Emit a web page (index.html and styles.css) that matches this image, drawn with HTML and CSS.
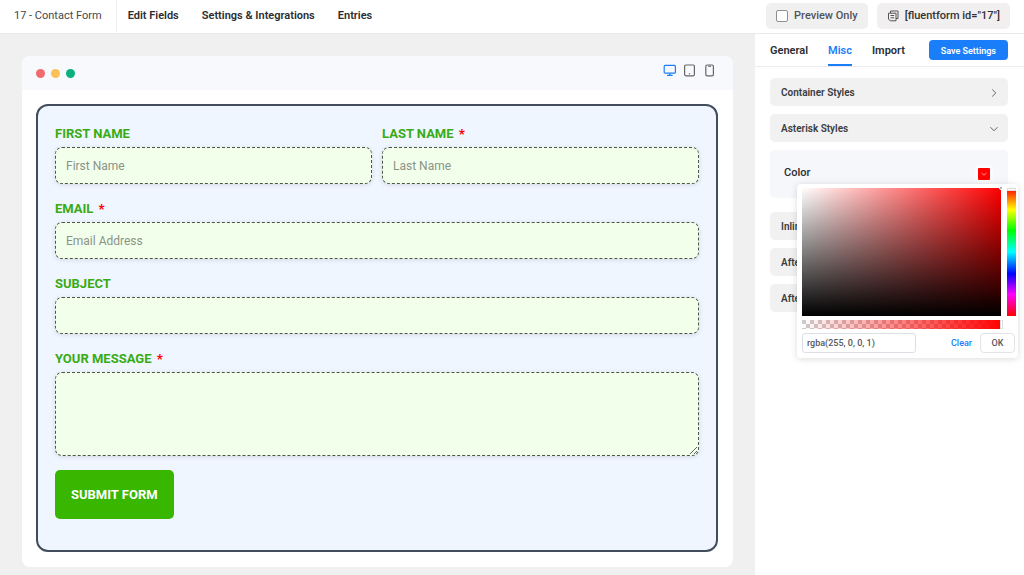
FILE: index.html
```html
<!DOCTYPE html>
<html lang="en">
<head>
<meta charset="utf-8">
<meta name="viewport" content="width=device-width, initial-scale=1">
<title>Contact Form</title>
<link rel="stylesheet" href="styles.css">
</head>
<body>
<header class="topbar">
  <span class="form-title">17 - Contact Form</span>
  <nav class="nav">
    <a href="#fields">Edit Fields</a>
    <a href="#settings">Settings &amp; Integrations</a>
    <a href="#entries">Entries</a>
  </nav>
  <div class="top-actions">
    <label class="chip"><input type="checkbox" class="check">Preview Only</label>
    <button type="button" class="chip chip-code">
      <svg width="12" height="12" viewBox="0 0 12 12" fill="none" stroke="#555" stroke-width="1"><path d="M3.5 3V1h7.5v7.5H9"/><path d="M1.5 3.2H9v7.6H3.2L1.5 9z"/><path d="M3.5 5.5h3.6M3.5 7.8h3.6"/></svg>
      [fluentform id="17"]
    </button>
  </div>
</header>
<div class="workspace">
  <main class="stage">
    <section class="window">
      <div class="window-bar">
        <div class="dots"><i class="dot red"></i><i class="dot yellow"></i><i class="dot green"></i></div>
        <div class="devices">
          <button type="button" class="device active" aria-label="Desktop"><svg width="14" height="14" viewBox="0 0 14 14" fill="none" stroke="currentColor" stroke-width="1.2"><rect x="1.2" y="1.4" width="11.2" height="7.8" rx="1"/><path d="M6.8 9.2v2M4 11.4h5.6"/></svg></button>
          <button type="button" class="device" aria-label="Tablet"><svg width="14" height="14" viewBox="0 0 14 14" fill="none" stroke="currentColor" stroke-width="1.2"><rect x="1.6" y="1" width="9.8" height="10.8" rx="1.2"/><path d="M5.9 9.8h1.2"/></svg></button>
          <button type="button" class="device" aria-label="Mobile"><svg width="14" height="14" viewBox="0 0 14 14" fill="none" stroke="currentColor" stroke-width="1.2"><rect x="2.8" y="1" width="7.6" height="10.8" rx="1.4"/><path d="M5.2 2.2h2.8"/></svg></button>
        </div>
      </div>
      <form class="form">
        <div class="row">
          <div class="field"><label for="first">FIRST NAME</label><input id="first" type="text" placeholder="First Name"></div>
          <div class="field"><label for="last">LAST NAME <b class="req">*</b></label><input id="last" type="text" placeholder="Last Name"></div>
        </div>
        <div class="field"><label for="email">EMAIL <b class="req">*</b></label><input id="email" type="email" placeholder="Email Address"></div>
        <div class="field"><label for="subject">SUBJECT</label><input id="subject" type="text"></div>
        <div class="field"><label for="message">YOUR MESSAGE <b class="req">*</b></label><textarea id="message"></textarea></div>
        <button type="button" class="submit">SUBMIT FORM</button>
      </form>
    </section>
  </main>
  <aside class="sidebar">
    <div class="tabs">
      <a href="#general" class="tab">General</a>
      <a href="#misc" class="tab selected">Misc</a>
      <a href="#import" class="tab">Import</a>
      <button type="button" class="save">Save Settings</button>
    </div>
    <div class="panels">
      <button type="button" class="accordion">Container Styles<svg width="10" height="10" viewBox="0 0 10 10" fill="none" stroke="#666" stroke-width="1"><path d="M3.2 1.5 6.8 5 3.2 8.5"/></svg></button>
      <button type="button" class="accordion">Asterisk Styles<svg width="10" height="10" viewBox="0 0 10 10" fill="none" stroke="#666" stroke-width="1"><path d="M1.5 3.2 5 6.8 8.5 3.2"/></svg></button>
      <div class="panel">
        <span>Color</span>
        <button type="button" class="swatch" aria-label="Pick color"><svg width="12" height="12" viewBox="0 0 12 12"><rect width="12" height="12" rx="1" fill="#f00"/><path d="M3.5 5 6 7.2 8.5 5" fill="none" stroke="#ff8f8f"/></svg></button>
        <div class="picker">
          <div class="picker-main">
            <div class="saturation"><i class="cursor"></i></div>
            <div class="hue"><i class="hue-thumb"></i></div>
          </div>
          <div class="alpha"><i class="alpha-thumb"></i></div>
          <div class="picker-foot">
            <input type="text" class="value" aria-label="Color value" value="rgba(255, 0, 0, 1)">
            <button type="button" class="clear">Clear</button>
            <button type="button" class="ok">OK</button>
          </div>
        </div>
      </div>
      <button type="button" class="accordion">Inline Error</button>
      <button type="button" class="accordion">After Success</button>
      <button type="button" class="accordion">After Error</button>
    </div>
  </aside>
</div>
</body>
</html>
```
FILE: styles.css
```css
* { box-sizing: border-box; }
body {
  margin: 0;
  min-height: 100vh;
  display: flex;
  flex-direction: column;
  font-family: Roboto, "Liberation Sans", sans-serif;
  font-size: 11px;
  line-height: 16px;
  color: #2b2d31;
  background: #fff;
}
button, input, textarea { font: inherit; color: inherit; }
button { border: 0; background: none; padding: 0; cursor: pointer; }
a { color: inherit; text-decoration: none; }
svg { display: block; flex: none; }

.topbar { display: flex; align-items: center; height: 34px; padding-bottom: 1px; border-bottom: 1px solid #e9e9eb; }
.form-title { display: flex; align-items: center; align-self: stretch; padding: 0 14px; border-right: 1px solid #ededed; color: #45484d; }
.nav { display: flex; gap: 23px; padding-left: 11px; font-weight: 600; }
.top-actions { display: flex; gap: 9px; margin-left: auto; padding-right: 14px; }
.chip { display: flex; align-items: center; gap: 6px; height: 26px; padding: 0 10px; border-radius: 5px; background: #f0f0f1; font-weight: 500; color: #50535a; }
.chip-code { gap: 6px; color: #333; background: #f1efef; }
.check { appearance: none; width: 12px; height: 12px; margin: 0; border: 1px solid #8c8f94; border-radius: 2px; background: #fff; }

.workspace { display: flex; flex: 1; }
.stage { flex: 1; min-width: 0; padding: 22px 22px 8px; background: #f0f0f0; }
.window { border-radius: 8px; background: #fff; padding-bottom: 15px; }
.window-bar { display: flex; align-items: center; justify-content: space-between; height: 34px; padding: 0 16px 0 14px; border-radius: 8px 8px 0 0; background: #f8f9fc; }
.dots { display: flex; gap: 6px; }
.dot { width: 9px; height: 9px; border-radius: 50%; }
.red { background: #f26b6f; }
.yellow { background: #fcc156; }
.green { background: #0bb07b; }
.devices { display: flex; gap: 6px; padding-bottom: 5px; }
.device { color: #666; }
.device.active { color: #1a7efb; }

.form { display: flex; flex-direction: column; gap: 14px; margin: 14px 15px 0 14px; padding: 17px 17px 31px; border: 2px solid #434c5c; border-radius: 12px; background: #f0f6ff; }
.row { display: grid; grid-template-columns: 1fr 1fr; gap: 10px; }
.field { display: flex; flex-direction: column; gap: 3px; }
.field label { padding-top: 1px; font-size: 13px; line-height: 20px; font-weight: 700; color: #38ab14; }
.req { margin-left: 2px; color: #f00; }
.field input, .field textarea { width: 100%; height: 37px; padding: 1px 10px 0; border: 1px dashed #4c5648; border-radius: 7px; background: #f2ffeb; font-size: 12px; box-shadow: 0 1px 4px rgba(60, 70, 100, .16); }
.field textarea { display: block; height: 84px; resize: vertical; }
.field ::placeholder { color: #8b9388; opacity: 1; }
.submit { align-self: flex-start; height: 49px; padding: 0 16px; border-radius: 5px; background: #38b600; color: #fff; font-size: 13px; font-weight: 700; }

.sidebar { width: 269px; flex: none; }
.tabs { display: flex; align-items: stretch; height: 33px; padding: 0 16px 0 15px; border-bottom: 1px solid #ececee; font-weight: 600; gap: 20px; }
.tab { display: flex; align-items: center; border-bottom: 2px solid transparent; padding-top: 3px; }
.tab.selected { color: #1a7efb; border-color: #1a7efb; }
.save { align-self: center; height: 20px; margin-left: auto; padding: 1px 12px 0; border-radius: 4px; background: #1a7efb; color: #fff; font-size: 9px; font-weight: 600; white-space: nowrap; }
.panels { display: flex; flex-direction: column; gap: 8px; padding: 11px 16px 0 15px; }
.accordion { display: flex; align-items: center; justify-content: space-between; height: 28px; padding: 1px 9px 0 11px; border-radius: 5px; background: #f1f1f1; font-size: 10px; font-weight: 600; color: #3a3c40; }
.panel { position: relative; display: flex; justify-content: space-between; height: 48px; margin-bottom: 6px; padding: 15px 15px 0 14px; border-radius: 5px; background: #f5f7fb; font-weight: 500; }
.swatch { align-self: flex-start; padding: 3px; border-radius: 4px; background: #fafbfd; }

.picker { position: absolute; z-index: 1; top: 34px; right: -10px; width: 221px; padding: 4px 2px 5px 5px; border-radius: 4px; background: #fff; box-shadow: 0 1px 7px rgba(0, 0, 0, .14); }
.picker-main { display: flex; gap: 6px; height: 128px; }
.saturation { position: relative; flex: 1; background: linear-gradient(to top, #000, transparent), linear-gradient(to right, #fff, #f00); }
.cursor { position: absolute; top: -2px; right: -2px; width: 4px; height: 4px; border: 1px solid #fff; border-radius: 50%; background: #999; }
.hue { position: relative; width: 9px; background: linear-gradient(#f00, #ff0 17%, #0f0 33%, #0ff 50%, #00f 67%, #f0f 83%, #f00); }
.hue-thumb { position: absolute; top: 0; left: 0; width: 100%; height: 3px; border: 1px solid #ddd; background: #fff; }
.alpha { position: relative; height: 9px; margin: 4px 13px 4px 0; background: linear-gradient(to right, transparent, #f00), repeating-conic-gradient(#fff 0 25%, #ccc 0 50%) 0 0 / 8px 8px; }
.alpha-thumb { position: absolute; top: 0; right: 0; width: 3px; height: 100%; border: 1px solid #ddd; background: #fff; }
.picker-foot { display: flex; align-items: center; padding-right: 1px; font-size: 9px; color: #55585e; }
.value { width: 114px; height: 20px; padding: 0 4px; border: 1px solid #dcdfe6; border-radius: 3px; background: #fff; }
.clear { margin-left: auto; color: #1a7efb; font-weight: 500; }
.ok { width: 35px; height: 20px; margin-left: 8px; border: 1px solid #e1e3e8; border-radius: 4px; font-weight: 500; }
```
